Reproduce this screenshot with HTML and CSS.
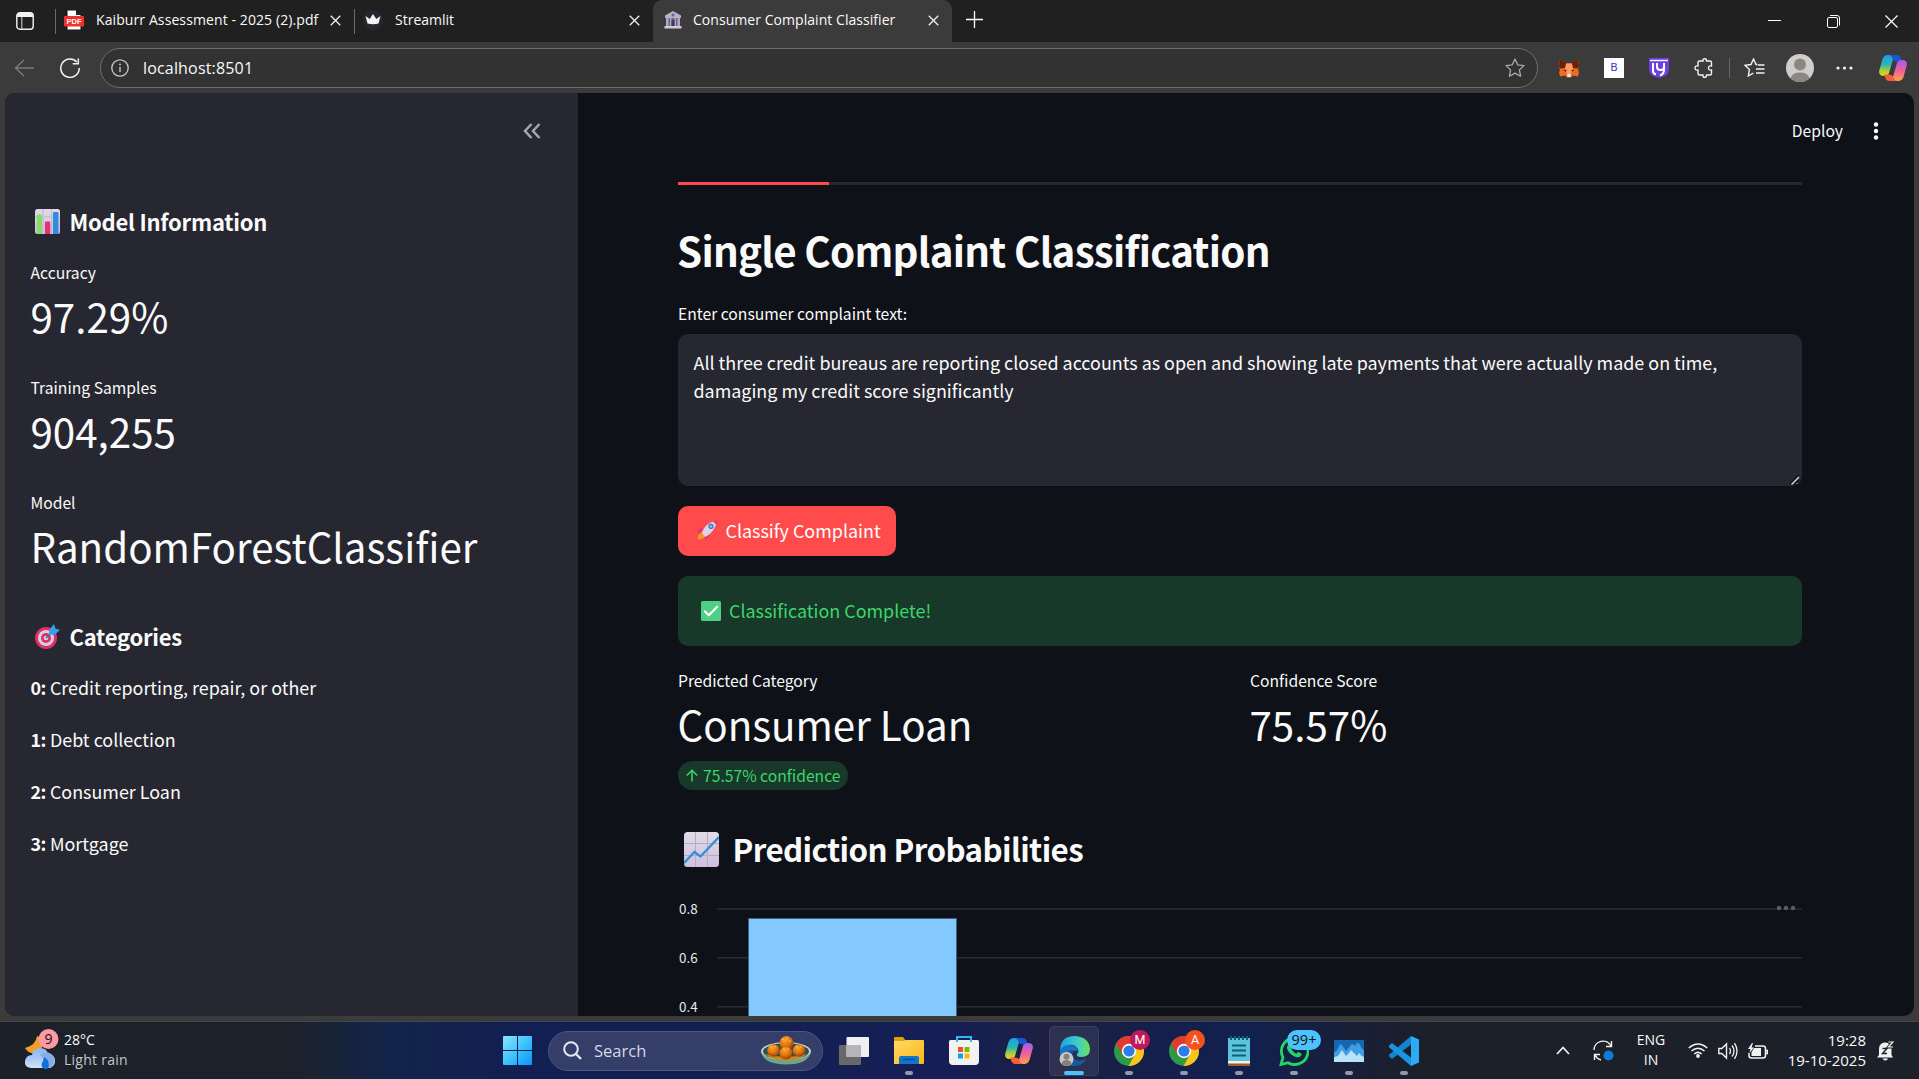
FILE: index.html
```html
<!DOCTYPE html>
<html lang="en">
<head>
<meta charset="utf-8">
<title>Consumer Complaint Classifier</title>
<link rel="stylesheet" href="styles.css">
</head>
<body>
<svg class="defs" width="0" height="0" aria-hidden="true">
  <defs>
    <linearGradient id="cpA" x1="0" y1="0" x2="0" y2="1"><stop offset="0" stop-color="#1b9df0"/><stop offset=".45" stop-color="#2bb5b0"/><stop offset=".75" stop-color="#a9d03a"/><stop offset="1" stop-color="#ffc81e"/></linearGradient>
    <linearGradient id="cpB" x1="0" y1="0" x2="0" y2="1"><stop offset="0" stop-color="#a45cf5"/><stop offset=".5" stop-color="#ee5f9c"/><stop offset="1" stop-color="#ffa24a"/></linearGradient>
    <linearGradient id="win" x1="0" y1="0" x2="1" y2="1"><stop offset="0" stop-color="#8be4ff"/><stop offset=".5" stop-color="#3fc4fb"/><stop offset="1" stop-color="#0a92fb"/></linearGradient>
    <linearGradient id="edgeTop" x1="0" y1="0" x2="1" y2="0"><stop offset="0" stop-color="#1ba2e6"/><stop offset=".6" stop-color="#3ccfc6"/><stop offset="1" stop-color="#6fe05a"/></linearGradient>
    <linearGradient id="folder" x1="0" y1="0" x2="1" y2="1"><stop offset="0" stop-color="#ffd966"/><stop offset="1" stop-color="#f7b916"/></linearGradient>
    <linearGradient id="paper" x1="0" y1="0" x2="0" y2="1"><stop offset="0" stop-color="#e0dbe8"/><stop offset="1" stop-color="#d0bfe0"/></linearGradient>
    <linearGradient id="cloud" x1="0" y1="0" x2="0" y2="1"><stop offset="0" stop-color="#8fb6ee"/><stop offset=".5" stop-color="#a9c6f5"/><stop offset="1" stop-color="#d3e2fb"/></linearGradient>
    <radialGradient id="ball" cx=".4" cy=".3" r=".8"><stop offset="0" stop-color="#ffa030"/><stop offset=".5" stop-color="#de7410"/><stop offset="1" stop-color="#7a3304"/></radialGradient>
    <symbol id="copilot" viewBox="0 0 28 26">
      <path d="M9 0h9q-3 1-4.500 6L10 18q-1 3-5 3-6 0-4.600-6L3.500 4Q5 0 9 0z" fill="url(#cpA)"/>
      <path d="M9 0h8.500q3.500 0 4.500 4l.7 2.500h-5q-3 0-4-2.500Q12.500 0 9 0z" fill="#1757d6"/>
      <path d="M19 26h-9q3-1 4.500-6L18 8q1-3 5-3 6 0 4.600 6l-3.100 11Q23 26 19 26z" fill="url(#cpB)"/>
      <path d="M19 26h-8.500Q7 26 6 22l-.7-2.500h5q3 0 4 2.500 1.200 4 4.700 4z" fill="#f5603a"/>
    </symbol>
    <symbol id="chrome" viewBox="0 0 30 30">
      <circle cx="15" cy="15" r="15" fill="#2e9a48"/>
      <path d="M15 15L2 7.5A15 15 0 0 1 28 7.5z" fill="#e23b2e"/>
      <path d="M15 8h13.3A15 15 0 0 1 14.5 30L21 18.5z" fill="#fcc419"/>
      <path d="M2 7.5L8.5 18.5 15 8z" fill="#e23b2e"/>
      <circle cx="15" cy="15" r="7.2" fill="#fff"/><circle cx="15" cy="15" r="5.6" fill="#2f7be8"/>
    </symbol>
    <symbol id="x" viewBox="0 0 12 12"><path d="M.8.8l10.4 10.4M11.2.8L.8 11.2" fill="none" stroke="#f2f2f2" stroke-width="1.4"/></symbol>
  </defs>
</svg>

<div class="tabstrip">
  <svg class="tab-actions" width="18" height="18" viewBox="0 0 18 18"><rect x=".8" y=".8" width="16.4" height="16.4" rx="3" fill="none" stroke="#f2f2f2" stroke-width="1.4"/><path d="M1 5V3.500Q1 1 3.500 1h11Q17 1 17 3.500V5z" fill="#f2f2f2"/><path d="M5.800 5v12" stroke="#bbb" stroke-width="1.200"/></svg>
  <div class="tab tab-pdf">
    <svg width="20" height="20" viewBox="0 0 20 20"><path d="M3 0h9l5 5v15H3z" fill="#fff" stroke="#111" stroke-width="1"/><path d="M12 0v5h5z" fill="#222"/><rect x="0" y="6" width="20" height="10.500" rx="1" fill="#f0312f"/><text class="pdf-text" x="10" y="14" text-anchor="middle">PDF</text></svg>
    <span class="tab-title">Kaiburr Assessment - 2025 (2).pdf</span>
    <svg width="11" height="11"><use href="#x"/></svg>
  </div>
  <div class="tab tab-streamlit">
    <svg width="20" height="20" viewBox="0 0 20 20"><circle cx="10" cy="10" r="10" fill="#262730"/><path d="M2.500 6l4.200 3L10 4l3.300 5 4.200-3-2 7.500q-5.500 1.400-11 0z" fill="#f5f5f5"/></svg>
    <span class="tab-title">Streamlit</span>
    <svg width="11" height="11"><use href="#x"/></svg>
  </div>
  <div class="tab tab-active">
    <svg width="18" height="18" viewBox="0 0 18 18"><path d="M9 0l8 4.500V7H1V4.500z" fill="#b9b0c6"/><path d="M2 7h14v8H2z" fill="#6b6180"/><path d="M2 7h2.500v8H2zM6 7h1.500v8H6zM10.500 7H12v8h-1.500zM13.500 7H16v8h-2.500z" fill="#b3a8c4"/><rect x="7.500" y="9" width="3" height="6" fill="#403758"/><circle cx="9" cy="4" r="1.500" fill="#7653a8"/><rect x=".5" y="15" width="17" height="2.500" fill="#d0c9da"/></svg>
    <span class="tab-title">Consumer Complaint Classifier</span>
    <svg width="11" height="11"><use href="#x"/></svg>
  </div>
  <svg class="new-tab" width="17" height="17" viewBox="0 0 17 17"><path d="M8.500 0v17M0 8.500h17" stroke="#fff" stroke-width="1.300"/></svg>
  <div class="window-buttons">
    <svg width="13" height="13" viewBox="0 0 13 13"><path d="M0 5.500h13" stroke="#fff"/></svg>
    <svg width="13" height="13" viewBox="0 0 13 13"><rect x=".5" y="2.500" width="10" height="10" rx="1.500" fill="none" stroke="#fff"/><path d="M3 .5h7q2.500 0 2.500 2.500v7.500" fill="none" stroke="#fff"/></svg>
    <svg width="13" height="13" viewBox="0 0 13 13"><path d="M.5.5l12 12M12.500.5l-12 12" stroke="#fff" stroke-width="1.200"/></svg>
  </div>
</div>

<div class="toolbar">
  <svg width="20" height="18" viewBox="0 0 20 18"><path d="M10 1L1.500 9 10 17M1.500 9H20" fill="none" stroke="#7b7b7b" stroke-width="1.400"/></svg>
  <svg class="reload" width="20" height="20" viewBox="0 0 20 20"><path d="M16.800 4A9.200 9.200 0 1 0 19.200 10" fill="none" stroke="#f2f2f2" stroke-width="1.500"/><path d="M18.300.5v5.200h-5.600" fill="none" stroke="#f2f2f2" stroke-width="1.500"/></svg>
  <div class="address">
    <svg width="18" height="18" viewBox="0 0 18 18"><circle cx="9" cy="9" r="8.200" fill="none" stroke="#c8c8c8" stroke-width="1.300"/><path d="M9 8v5" stroke="#c8c8c8" stroke-width="1.400"/><circle cx="9" cy="5.400" r="1" fill="#c8c8c8"/></svg>
    <span class="url">localhost:8501</span>
    <svg class="star" width="20" height="20" viewBox="0 0 20 20"><path d="M10 1l2.700 5.800 6.300.8-4.600 4.300 1.200 6.300L10 15.100l-5.600 3.100 1.200-6.300L1 7.600l6.300-.8z" fill="none" stroke="#aaa" stroke-width="1.300" stroke-linejoin="round"/></svg>
  </div>
  <div class="extensions">
    <span class="slot"><svg width="20" height="19" viewBox="0 0 20 19"><path d="M1 0l6 4.500h6L19 0l1 7-1 4 1 2.500-1.200 4L14 16.500 12 18.500H8l-2-2-4.800 1L0 13.500 1 11 0 7z" fill="#f26a22"/><path d="M1 0l6.500 4.500L6 9l-5 .5L0 7zM19 0l-6.500 4.500L14 9l5 .5L20 7z" fill="#6e1e08"/><path d="M7 4.500h6L14 10l-2 5H8l-2-5z" fill="#ff9a62"/><path d="M4.500 10.500l3 .5-.5 2zM15.500 10.500l-3 .5.500 2z" fill="#33231c"/><path d="M8 15.500l2-1 2 1-.5 2.500h-3z" fill="#e6e6e6"/></svg></span>
    <span class="slot"><span class="ext-b">B</span></span>
    <span class="slot"><svg width="20" height="20" viewBox="0 0 20 20"><path d="M0 0h20v11q0 5-4 7l-6 2-6-2q-4-2-4-7z" fill="#6d3fe0"/><path d="M1 2.500h18" stroke="#fff" stroke-width="1.400"/><path d="M4 5v8q0 2.500 3 3.500M8 5v4q0 3 3.500 3T15 9V5v7q0 4-4 5.500" fill="none" stroke="#fff" stroke-width="2"/></svg></span>
    <span class="slot"><svg width="20" height="20" viewBox="0 0 20 20"><path d="M4 4.500q0-1.500 1.500-1.500H9q-.3-2.300 1.700-2.300T12.500 3H16q1.500 0 1.500 1.500V8q-3-.5-3 2t3 2v3.500q0 1.500-1.500 1.500h-3.500q.2 2.300-1.800 2.300T9 17H5.500Q4 17 4 15.500V12Q1 12.500 1 10t3-2z" fill="none" stroke="#f2f2f2" stroke-width="1.400"/></svg></span>
    <span class="rule"></span>
    <span class="slot slot-fav"><svg width="21" height="20" viewBox="0 0 21 20"><path d="M13.500 6.500H12L9.500 1 7 6.500l-6 .8 4.400 4.200L4.300 18l5-2.800M14 7h6.500M12 11h8.500M12 15h8.500" fill="none" stroke="#f2f2f2" stroke-width="1.400"/></svg></span>
    <span class="slot"><svg width="28" height="28" viewBox="0 0 28 28"><circle cx="14" cy="14" r="14" fill="#d0cecb"/><circle cx="14" cy="10.500" r="6" fill="#8b8783"/><path d="M4.500 24.300Q6 18.500 14 18.500t9.500 5.800A14 14 0 0 1 4.500 24.300z" fill="#8b8783"/></svg></span>
    <span class="slot"><svg width="17" height="4" viewBox="0 0 17 4"><g fill="#f2f2f2"><circle cx="2" cy="2" r="1.600"/><circle cx="8.500" cy="2" r="1.600"/><circle cx="15" cy="2" r="1.600"/></g></svg></span>
    <span class="slot slot-copilot"><svg width="28" height="26"><use href="#copilot" width="28" height="26"/></svg></span>
  </div>
</div>

<div class="page">
  <aside class="sidebar">
    <div class="collapse"><svg width="18" height="16" viewBox="0 0 18 16"><path d="M8.500 1L2 8l6.500 7M16.500 1L10 8l6.500 7" fill="none" stroke="#a5a6ab" stroke-width="2.500"/></svg></div>
    <h3 class="side-title">
      <svg width="25" height="25" viewBox="0 0 25 25"><rect width="25" height="25" rx="2.500" fill="url(#paper)"/><path d="M8 0v25M16.500 0v25M0 8h25M0 16.500h25" stroke="#b9b0c6" stroke-width=".8"/><rect x="1.800" y="5.500" width="5.200" height="19.500" rx="1" fill="#86dd66"/><rect x="10" y="12.500" width="5.200" height="12.500" rx="1" fill="#e8306f"/><rect x="18" y="3" width="5.500" height="22" rx="1" fill="#2f8be0"/></svg>
      <span>Model Information</span>
    </h3>
    <div class="metric"><div class="label">Accuracy</div><div class="value">97.29%</div></div>
    <div class="metric"><div class="label">Training Samples</div><div class="value">904,255</div></div>
    <div class="metric"><div class="label">Model</div><div class="value">RandomForestClassifier</div></div>
    <h3 class="side-title categories">
      <svg width="25" height="25" viewBox="0 0 25 25"><circle cx="11" cy="14" r="11" fill="#dd3165"/><circle cx="11" cy="14" r="8" fill="#d9cfe2"/><circle cx="11" cy="14" r="5" fill="#dd3165"/><circle cx="11" cy="14" r="2.300" fill="#d9cfe2"/><path d="M11 14l7-7" stroke="#3b5ba5" stroke-width="1.500"/><path d="M13.500 11l1-5.500L19 0l1.500 4.500 4.500 1.500-5 4.500z" fill="#37a0ec"/></svg>
      <span>Categories</span>
    </h3>
    <div class="category-list">
      <p><b>0:</b> Credit reporting, repair, or other</p>
      <p><b>1:</b> Debt collection</p>
      <p><b>2:</b> Consumer Loan</p>
      <p><b>3:</b> Mortgage</p>
    </div>
  </aside>
  <main class="main">
    <header class="app-header">
      <span class="deploy">Deploy</span>
      <svg width="6" height="18" viewBox="0 0 6 18"><g fill="#fafafa"><circle cx="3" cy="2.500" r="2.200"/><circle cx="3" cy="9" r="2.200"/><circle cx="3" cy="15.500" r="2.200"/></g></svg>
    </header>
    <div class="content">
      <div class="tab-line"><div class="tab-highlight"></div></div>
      <h2>Single Complaint Classification</h2>
      <div class="label input-label">Enter consumer complaint text:</div>
      <div class="textarea">All three credit bureaus are reporting closed accounts as open and showing late payments that were actually made on time,<br>damaging my credit score significantly
        <svg class="grip" width="10" height="10" viewBox="0 0 10 10"><path d="M0 9.500L8.500 0M4.500 9.500L9 5" stroke="#0e1015" stroke-width="1.500"/><path d="M1.500 9.500L9 2" stroke="#d4d4d4" stroke-width="1.500"/><path d="M6.500 9l1-1" stroke="#d4d4d4" stroke-width="1"/></svg>
      </div>
      <button class="classify">
        <svg width="21" height="20" viewBox="0 0 21 20"><path d="M6 7L2 9l-2 4 5-1zM13 13l-1 4-4 3 0-5z" fill="#e8356f"/><path d="M1 19q-1-4 3-6l4 3q-2 4-7 3z" fill="#f7981d"/><path d="M4.500 13Q8 3 20 .5 18 12 8.500 17z" fill="#dcd3e6"/><path d="M16 1.500L20.500 0 19.500 5z" fill="#e8356f"/><circle cx="14" cy="6.300" r="2.600" fill="#2f6fb5"/><circle cx="14" cy="6.300" r="1.600" fill="#6fb8f0"/></svg>
        <span>Classify Complaint</span>
      </button>
      <div class="alert">
        <svg width="20" height="20" viewBox="0 0 20 20"><rect width="20" height="20" rx="1.500" fill="#4fcf84"/><path d="M3.800 10.300l4 4 8.400-8.600" fill="none" stroke="#fff" stroke-width="2.200" stroke-linecap="round" stroke-linejoin="round"/></svg>
        <span>Classification Complete!</span>
      </div>
      <div class="results">
        <div>
          <div class="label">Predicted Category</div><div class="value">Consumer Loan</div>
          <div class="delta"><svg width="12" height="13" viewBox="0 0 12 13"><path d="M6 12.500V1.500M.8 6.500L6 1.200l5.200 5.300" fill="none" stroke="#3dd56d" stroke-width="1.500"/></svg><span>75.57% confidence</span></div>
        </div>
        <div><div class="label">Confidence Score</div><div class="value">75.57%</div></div>
      </div>
      <h3 class="chart-title">
        <svg width="35" height="35" viewBox="0 0 35 35"><rect width="35" height="35" rx="3.500" fill="url(#paper)"/><path d="M11.500 0v35M23.500 0v35M0 11.500h35M0 23.500h35" stroke="#b5adbf"/><path d="M0 31L10.500 20l6 4.500L35 5" fill="none" stroke="#2e93d6" stroke-width="2.400"/></svg>
        <span>Prediction Probabilities</span>
      </h3>
      <svg class="chart" width="1124" height="126" viewBox="0 0 1124 126">
        <path d="M39 19h1085M39 67.700h1085M39 116.700h1085" stroke="#2a2c35" stroke-width="1.500"/>
        <rect x="70.500" y="28.500" width="208" height="110" fill="#83c9ff" stroke="#3f5f7c" stroke-width="1"/>
        <g class="axis"><text x="1" y="24">0.8</text><text x="1" y="73">0.6</text><text x="1" y="122">0.4</text></g>
        <g fill="#5b5d64"><circle cx="1101" cy="18" r="2.200"/><circle cx="1108" cy="18" r="2.200"/><circle cx="1115" cy="18" r="2.200"/></g>
      </svg>
    </div>
  </main>
</div>

<div class="taskbar">
  <div class="weather">
    <svg width="36" height="42" viewBox="0 0 36 42"><path d="M13 8Q12 17 1 20q4 7 12 5 7-3 5-12-1-4-5-5z" fill="#f0a028"/><path d="M7 40q-7-1-6-7t7-6q1-7 8-7t8 6q7 0 7 7t-8 7z" fill="url(#cloud)"/><path d="M16 27q8-6 13 1 3 6-2 12h-8q4-7-3-13z" fill="#84aeea"/><path d="M20 29q6 3 4.500 10-1 3-4 2-4-2-2.500-6 2-3 2-6z" fill="#116fe0"/><circle cx="24.500" cy="11" r="10" fill="#ff99a4"/><text class="badge-text" x="24.500" y="16" text-anchor="middle" fill="#111">9</text></svg>
    <div class="weather-text"><span>28°C</span><span class="dim">Light rain</span></div>
  </div>
  <div class="apps">
    <span class="app"><svg width="29" height="29" viewBox="0 0 29 29"><path d="M1 0h13v14H0V1q0-1 1-1zM15 0h13q1 0 1 1v13H15zM0 15h14v14H1q-1 0-1-1zM15 15h14v13q0 1-1 1H15z" fill="url(#win)"/></svg></span>
    <div class="search">
      <svg width="19" height="19" viewBox="0 0 19 19"><circle cx="8" cy="8" r="6.800" fill="none" stroke="#e6e8ef" stroke-width="2"/><path d="M13 13l5 5" stroke="#e6e8ef" stroke-width="2.400"/></svg>
      <span>Search</span>
      <svg class="sweets" width="50" height="29" viewBox="0 0 50 29"><ellipse cx="25" cy="15.500" rx="25" ry="9.500" fill="#c3d9d3"/><path d="M0 16q3 12.500 25 12.500T50 16q-5 8-25 8T0 16z" fill="#6aa68f"/><ellipse cx="25" cy="15.500" rx="23" ry="8.300" fill="#30504d"/><path d="M4 18q8 7 21 7t21-7q-10 3-21 3T4 18z" fill="#c98a24"/><circle cx="38" cy="14.500" r="6.200" fill="url(#ball)"/><circle cx="12.500" cy="14.500" r="6.200" fill="url(#ball)"/><circle cx="25.500" cy="7" r="7" fill="url(#ball)"/><circle cx="25" cy="17" r="6.500" fill="url(#ball)"/><g fill="#f3e04a"><circle cx="22" cy="3.500" r=".8"/><circle cx="26" cy="2.500" r=".8"/><circle cx="29" cy="5" r=".8"/><circle cx="10" cy="11" r=".7"/><circle cx="14" cy="10.500" r=".7"/><circle cx="23" cy="13" r=".7"/><circle cx="27" cy="13" r=".7"/><circle cx="36" cy="11" r=".7"/><circle cx="40" cy="11" r=".7"/></g></svg>
    </div>
    <span class="app"><svg width="30" height="28" viewBox="0 0 30 28"><rect x="0" y="8" width="22" height="20" rx="1" fill="#68686b"/><rect x="7.500" y="0" width="22.500" height="20" rx="1" fill="#f0f0f3"/><path d="M7.500 8H22v12H7.500z" fill="#b5b5b8"/></svg></span>
    <span class="app open"><svg width="30" height="27" viewBox="0 0 30 27"><path d="M0 1q0-1 1-1h8l3 4h-12z" fill="#e0a10a"/><path d="M0 4h9l3-1h17q1 0 1 1v22q0 1-1 1H0z" fill="url(#folder)"/><path d="M5 27v-6q0-2 2-2h16q2 0 2 2v6z" fill="#0f76ca"/><path d="M9 22.500h12" stroke="#064b8c" stroke-width="1.300"/></svg></span>
    <span class="app"><svg width="30" height="30" viewBox="0 0 30 30"><path d="M0 5.500Q0 4 1.500 4h27Q30 4 30 5.500V25q0 4-4 4H4q-4 0-4-4z" fill="#f2f2f3"/><path d="M8 6V1h14v5" fill="none" stroke="#28bff0" stroke-width="2"/><path d="M9 11h5v5H9z" fill="#f25022"/><path d="M15.500 11h5v5h-5z" fill="#7fba00"/><path d="M9 17.500h5v5H9z" fill="#00a4ef"/><path d="M15.500 17.500h5v5h-5z" fill="#ffb900"/></svg></span>
    <span class="app"><svg width="28" height="26"><use href="#copilot" width="28" height="26"/></svg></span>
    <span class="app active"><svg width="31" height="30" viewBox="0 0 31 30"><path d="M1 15Q1 0 16 0q14 1 15 13 0 8-9 8-5 0-4-3 3-3 0-6-3-4-8-3-6 1-9 6z" fill="url(#edgeTop)"/><path d="M1 15q3-6 9-6 8 0 9 6-5-2-6 3 0 6 7 7 4 0 7-2-4 7-12 7Q1 29 1 15z" fill="#1674c9"/><path d="M10 14q-4 10 5 16 8 0 12-7-3 2-7 2-7-1-7-7 0-3 2-4z" fill="#155a9c"/><circle cx="7.500" cy="23" r="7" fill="#c9c7c4"/><circle cx="7.500" cy="20.800" r="3" fill="#85817e"/><path d="M2.500 27.500q1-3.500 5-3.500t5 3.500q-2 2.500-5 2.500t-5-2.500z" fill="#85817e"/></svg></span>
    <span class="app open"><svg width="30" height="30"><use href="#chrome" width="30" height="30"/></svg><span class="profile crimson">M</span></span>
    <span class="app open"><svg width="30" height="30"><use href="#chrome" width="30" height="30"/></svg><span class="profile orange">A</span></span>
    <span class="app open"><svg width="22" height="30" viewBox="0 0 22 30"><rect y="2" width="22" height="26" fill="#5cc3dc"/><path d="M0 25h22v3H0z" fill="#e9f3f5"/><path d="M0 27.500h22V30H0z" fill="#a8571b"/><path d="M3 0v4M7 0v4M11 0v4M15 0v4M19 0v4" stroke="#0c5c7c" stroke-width="2"/><path d="M4 9.500h14M4 14.500h14M4 19.500h14" stroke="#0f6079" stroke-width="1.800"/></svg></span>
    <span class="app open"><svg width="30" height="30" viewBox="0 0 30 30"><path d="M2 28.500l2-7A13.300 13.300 0 1 1 9 26.700z" fill="none" stroke="#25d366" stroke-width="2.800"/><path d="M9.500 8.500q2-2 3 0l1 2.300q.3 1-1.200 2.200 2 3.500 5 4.700 1.500-2 2.200-1.700l2.800 1.500q1 .8-.8 2.800-2.500 2.200-7-.3-5-3-6.500-7.500-.5-2.500 1.500-4z" fill="#25d366"/></svg><span class="count">99+</span></span>
    <span class="app open"><svg width="30" height="22" viewBox="0 0 30 22"><rect width="30" height="22" fill="#1767b0"/><path d="M0 12q3 0 5-6 1-3 3-1l4 6 5-6q2-2 4 1l2-3q2-1 3 2 2 5 4 5v12H0z" fill="#3d9fe0"/><path d="M0 17q4 0 6-4l2-3 4 6 3-3 2-3 3 3 3 3 2-3q2 3 5 4v5H0z" fill="#b9e3fb"/></svg></span>
    <span class="app open"><svg width="30" height="30" viewBox="0 0 30 30"><path d="M22 0L30 3.500v23L22 30z" fill="#2eaaf2"/><path d="M22 0v8.500L3 23 0 20.500v-1.800z" fill="#1583cf"/><path d="M22 30v-8.500L3 7 0 9.500v1.800z" fill="#1b93df"/></svg></span>
  </div>
  <div class="tray">
    <svg class="chev" width="14" height="9" viewBox="0 0 14 9"><path d="M1 8l6-6.500L13 8" fill="none" stroke="#f2f2f2" stroke-width="1.700"/></svg>
    <svg class="sync" width="21" height="21" viewBox="0 0 21 21"><path d="M1 10A9 9 0 0 1 18 6M18.500 1v5.500H13M1.500 20v-5.500H7M2 15q2 4 6 5" fill="none" stroke="#f2f2f2" stroke-width="1.400"/><circle cx="15.500" cy="15.500" r="5" fill="#0f7ad8"/></svg>
    <div class="lang"><span>ENG</span><span>IN</span></div>
    <svg class="wifi" width="20" height="15" viewBox="0 0 20 15"><path d="M.8 5Q10-3 19.200 5M3.500 8q6.500-5.600 13 0M6.300 11q3.700-3.200 7.400 0" fill="none" stroke="#f2f2f2" stroke-width="1.500"/><circle cx="10" cy="13" r="1.900" fill="#f2f2f2"/></svg>
    <svg class="vol" width="20" height="18" viewBox="0 0 20 18"><path d="M.8 6.500h3L8.500 2v14l-4.700-4.500h-3z" fill="none" stroke="#f2f2f2" stroke-width="1.400"/><path d="M11.500 6q2 3 0 6M14 3.500q4 5.500 0 11M16.500 1.200q5 7.800 0 15.600" fill="none" stroke="#f2f2f2" stroke-width="1.300"/></svg>
    <svg class="bat" width="20" height="16" viewBox="0 0 20 16"><path d="M7 3h8q2.500 0 2.500 2.500v7Q17.500 15 15 15H3.500Q1 15 1 12.500V10M18 7.500h1.500v3H18" fill="none" stroke="#f2f2f2" stroke-width="1.500"/><path d="M6 5h7v8H3.500V9.500z" fill="#f2f2f2"/><path d="M4 0L0 6h2.500L1.500 10 6 4.500H3.500L5 0z" fill="#f2f2f2"/></svg>
    <div class="clock"><span>19:28</span><span>19-10-2025</span></div>
    <svg class="bell" width="17" height="20" viewBox="0 0 17 20"><path d="M2 14V8q0-6 6-6.500 6.500.5 6.500 6.500v6l1.500 2.500H0z" fill="#f2f2f2"/><path d="M5.500 17.500h5.500q-.5 2-2.700 2t-2.800-2z" fill="#f2f2f2"/><path d="M5.500 7.500h4.500L5.500 12.500H10" fill="none" stroke="#1c2129" stroke-width="1.400"/><path d="M11 .8h5L11.500 6H16" fill="none" stroke="#1c2129" stroke-width="3"/><path d="M11.500 1H16l-4.500 5H16" fill="none" stroke="#f2f2f2" stroke-width="1.200"/></svg>
  </div>
</div>
</body>
</html>
```
FILE: styles.css
```css
* { box-sizing: border-box; }
body {
  margin: 0;
  width: 1919px;
  height: 1079px;
  overflow: hidden;
  background: #3b3b3b;
  color: #fafafa;
  font-family: "Noto Sans CJK SC", "Noto Sans", sans-serif;
  display: flex;
  flex-direction: column;
}
svg { display: block; flex: none; }
.defs { position: absolute; }
h2, h3, p { margin: 0; }

/* Browser tabs */
.tabstrip {
  height: 42px;
  background: #202020;
  display: flex;
  align-items: center;
  padding-left: 16px;
  font: 14px "Open Sans", sans-serif;
  flex: none;
}
.tab-actions { margin: 0 21px 1px 0; }
.tab { display: flex; align-items: center; white-space: nowrap; height: 42px; padding-bottom: 2px; }
.tab-title { padding-bottom: 1px; }
.tab > svg:last-child { margin-left: auto; }
.tab-pdf { width: 299px; padding-left: 9px; padding-right: 13px; position: relative; gap: 12px; }
.tab-pdf::before, .tab-pdf::after {
  content: ""; position: absolute; top: 9px; width: 1px; height: 25px; background: #6a6a6a; left: 0;
}
.tab-pdf::after { left: 299px; }
.tab-pdf .tab-title { letter-spacing: .1px; }
.tab-streamlit { width: 299px; padding-left: 9px; padding-right: 13px; gap: 12px; }
.pdf-text { font: bold 7.500px "Liberation Sans", sans-serif; fill: #fff; }
.tab-active {
  width: 299px;
  padding: 0 13px 2px 11px;
  background: #3b3b3b;
  border-radius: 9px 9px 0 0;
  gap: 11px;
}
.tab-active .tab-title { letter-spacing: .05px; }
.new-tab { margin: 0 0 3px 14px; }
.window-buttons { margin-left: auto; display: flex; gap: 45.500px; padding-right: 21px; }

/* Address row */
.toolbar { height: 51px; display: flex; align-items: center; padding: 1px 0 0 14px; flex: none; }
.reload { margin: 0 20px 0 26px; }
.address {
  width: 1438px; height: 40px;
  border: 1px solid #6e6e6e; border-radius: 20px; background: #323232;
  display: flex; align-items: center; padding: 0 12px 0 10px;
}
.url { font: 16px "Open Sans", sans-serif; margin-left: 14px; letter-spacing: .17px; }
.star { margin-left: auto; }
.extensions { display: flex; align-items: center; padding-left: 8.500px; }
.slot { width: 45px; height: 30px; display: flex; align-items: center; justify-content: center; }
.ext-b { width: 20px; height: 20px; background: #fff; color: #453fc0; font: 11px/20px "DejaVu Sans", sans-serif; text-align: center; }
.rule { width: 1px; height: 20px; background: #686868; margin-left: 2px; }
.slot-fav { margin-left: 2.500px; }
.slot-copilot { margin-left: 3px; }

/* Page viewport */
.page {
  height: 923px; margin: 0 5px 5px;
  border-radius: 10px; overflow: hidden;
  display: flex; background: #0e1117; flex: none;
}
.sidebar { width: 573px; background: #262730; padding: 0 26px 0 25.500px; font-size: 17.920px; }
.collapse { height: 76px; display: flex; align-items: center; justify-content: flex-end; padding-right: 11px; }
.side-title {
  display: flex; align-items: center; gap: 9.500px;
  height: 30px; margin: 37px 0 25px; padding-left: 4.500px;
  font-size: 22px; line-height: 30px;
}
.side-title span { letter-spacing: -.24px; }
.metric { height: 83px; margin-bottom: 32px; }
.label { font-size: 15.680px; line-height: 24px; white-space: nowrap; }
.value { font-size: 40.300px; line-height: 56px; margin-top: 3px; white-space: nowrap; }
.categories { margin: 47px 0 22px; }
.category-list { display: flex; flex-direction: column; gap: 24px; line-height: 28px; }
.category-list b { letter-spacing: -.5px; }

.main { flex: 1; }
.app-header { height: 76px; display: flex; align-items: center; justify-content: flex-end; gap: 30px; padding-right: 35px; }
.deploy { font-size: 15.680px; line-height: 24px; }
.content { padding: 0 112px 0 100px; font-size: 17.920px; line-height: 28px; }
.tab-line { height: 3px; margin-top: 13px; background: #262730; }
.tab-highlight { width: 151px; height: 3px; background: #ff4b4b; }
h2 { font-size: 40.300px; line-height: 54px; margin: 38px 0 25px -1px; white-space: nowrap; letter-spacing: -.75px; }
.textarea {
  position: relative;
  height: 152px; margin: 8px 0 20px; padding: 14px 15.500px;
  background: #262730; border-radius: 10px; white-space: nowrap;
}
.grip { position: absolute; right: 2px; bottom: 1px; }
.classify {
  height: 50px; width: 218px; border: 0; border-radius: 10px; padding: 0 0 0 18.500px;
  background: #ff4b4b; color: #fff; font: inherit; white-space: nowrap;
  display: flex; align-items: center; gap: 8px;
}
.classify span { padding-bottom: 2px; }
.classify svg { margin-bottom: 2px; }
.alert {
  height: 70px; margin: 20px 0 23px; padding-left: 23px;
  background: #183929; color: #3dd56d; border-radius: 10px;
  display: flex; align-items: center; gap: 8px;
}
.alert span { padding-bottom: 2px; }
.alert svg { margin-bottom: 1px; }
.results { display: grid; grid-template-columns: 1fr 1fr; column-gap: 20px; height: 122px; }
.results .value { margin-left: -.5px; }
.delta {
  width: 170px; height: 29px; margin-top: 9px; padding-left: 8px;
  border-radius: 15px; background: #183929; color: #3dd56d;
  font-size: 15.680px; line-height: 29px; white-space: nowrap;
  display: flex; align-items: center; gap: 5px;
}
.delta span { padding-bottom: 1px; }
.chart-title { display: flex; align-items: center; gap: 13.500px; font-size: 31.300px; line-height: 42px; margin: 37px 0 20px; padding-left: 6px; white-space: nowrap; letter-spacing: -.6px; }
.axis { font-size: 13.400px; fill: #e6eaf1; }

/* Taskbar */
.taskbar {
  height: 58px; flex: none;
  border-top: 1px solid #41464f;
  background: linear-gradient(90deg, #1c2129 0, #1c222c 300px, #12244a 390px, #121f52 520px, #151f55 960px, #1d2040 1050px, #141f4c 1160px, #11204f 1250px, #191f33 1370px, #1c2028 1440px, #1c2129 100%);
  display: flex;
  font: 14px "Open Sans", sans-serif;
}
.weather { width: 489.500px; display: flex; align-items: flex-start; padding: 6px 0 0 24px; gap: 4px; }
.weather-text { display: flex; flex-direction: column; line-height: 20px; padding-top: 1.500px; }
.dim { color: #c3c6ca; letter-spacing: .25px; }
.badge-text { font-size: 14px; }
.apps { display: flex; align-items: center; }
.app { width: 55px; height: 56px; display: flex; align-items: center; justify-content: center; position: relative; }
.app.open::after, .app.active::after {
  content: ""; position: absolute; bottom: 4px; width: 8px; height: 4px; border-radius: 2px; background: #9498ab;
}
.app.active::before {
  content: ""; position: absolute; inset: 3px 2.500px 3px; border-radius: 5px;
  background: rgba(255, 255, 255, .08); border: 1px solid rgba(255, 255, 255, .07);
}
.app.active svg { position: relative; }
.app.active::after { width: 20px; background: #4cc2ff; }
.search {
  width: 275px; height: 40px; margin: 0 3.500px;
  border: 1px solid #4e567c; border-radius: 20px; background: #353e69;
  display: flex; align-items: center; padding: 0 11px 0 14px;
  font-size: 16.500px; color: #d5d8e3; gap: 12px;
}
.sweets { margin-left: auto; }
.profile {
  position: absolute; left: 28.500px; top: 7px; width: 20px; height: 20px; border-radius: 50%;
  font: 12.500px/20px Roboto, sans-serif; text-align: center; color: #fff;
}
.crimson { background: #c2185b; }
.orange { background: #f4511e; }
.count {
  position: absolute; left: 20.500px; top: 7px; width: 34px; height: 20px; border-radius: 10px;
  background: #4cc2ff; color: #111; font-size: 14.500px; line-height: 20px; text-align: center;
}
.tray { display: flex; align-items: center; flex: 1; padding-left: 124.500px; }
.sync { margin-left: 23px; }
.lang, .clock { display: flex; flex-direction: column; line-height: 20px; padding-bottom: 1px; }
.lang { align-items: center; width: 40px; margin: 0 17px 0 17px; }
.vol { margin-left: 10px; }
.bat { margin-left: 10px; }
.clock { align-items: flex-end; width: 98px; font-size: 15px; }
.bell { margin-left: 11px; }
```
